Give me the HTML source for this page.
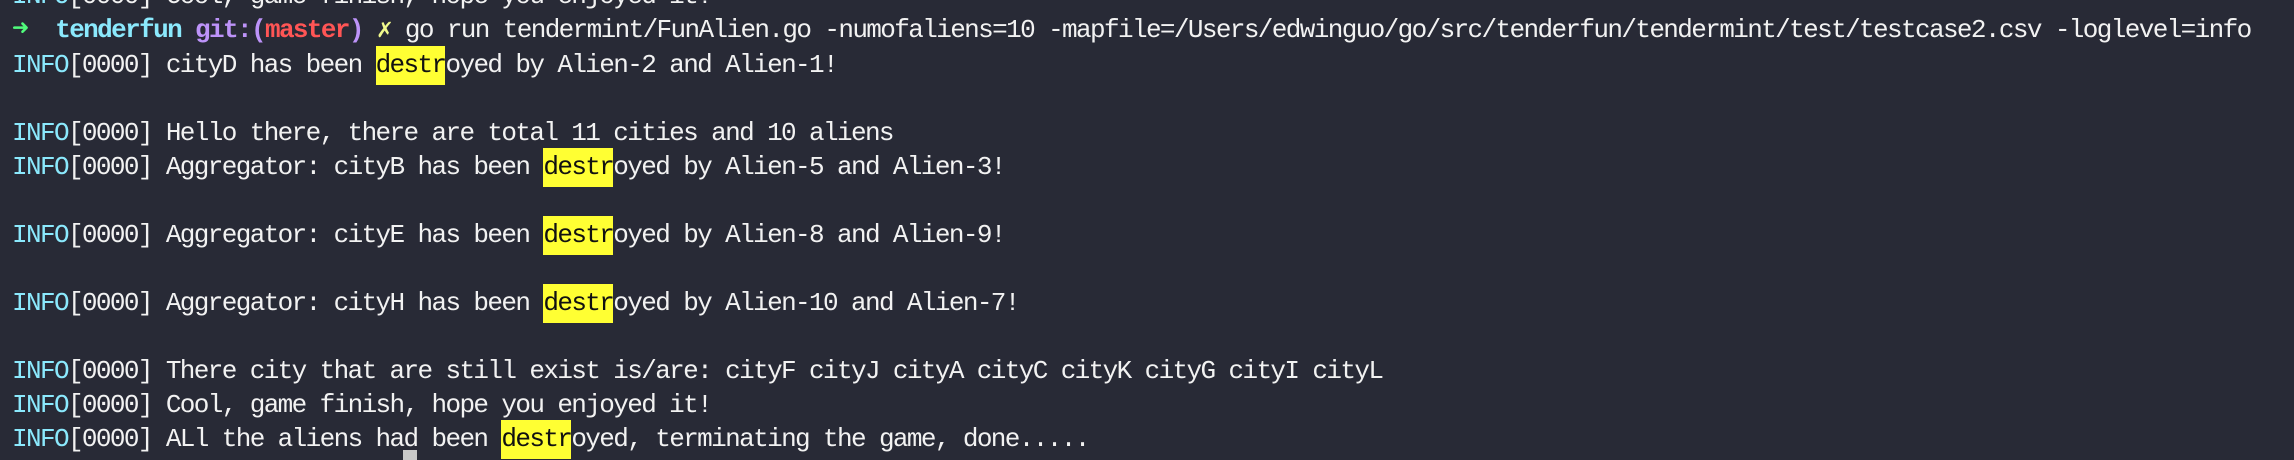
<!DOCTYPE html>
<html><head><meta charset="utf-8"><style>
html,body{margin:0;padding:0;}
body{width:2294px;height:460px;background:#282a36;overflow:hidden;position:relative;}
pre{position:absolute;left:12px;top:-21px;margin:0;font-family:"Liberation Mono","DejaVu Sans Mono",monospace;font-size:26px;line-height:34px;letter-spacing:-1.62px;color:#f2f2f2;white-space:pre;}
.i{color:#8be9fd}
.g{color:#50fa7b;font-weight:bold;font-size:28px}
.t{color:#8be9fd;font-weight:bold}
.p{color:#bd93f9;font-weight:bold}
.r{color:#ff5555;font-weight:bold}
.y{color:#f1fa8c;font-weight:bold}
.h{background:#ffff33;color:#111;padding:4px 0 5px 0}
#cur{position:absolute;left:403px;top:450px;width:14px;height:10px;background:#c8c8c8;}
</style></head><body>
<pre><span class="i">INFO</span>[0000] Cool, game finish, hope you enjoyed it!
<span class="g">➜</span>  <span class="t">tenderfun</span> <span class="p">git:(</span><span class="r">master</span><span class="p">)</span> <span class="y">✗</span> go run tendermint/FunAlien.go -numofaliens=10 -mapfile=/Users/edwinguo/go/src/tenderfun/tendermint/test/testcase2.csv -loglevel=info
<span class="i">INFO</span>[0000] cityD has been <span class="h">destr</span>oyed by Alien-2 and Alien-1!

<span class="i">INFO</span>[0000] Hello there, there are total 11 cities and 10 aliens
<span class="i">INFO</span>[0000] Aggregator: cityB has been <span class="h">destr</span>oyed by Alien-5 and Alien-3!

<span class="i">INFO</span>[0000] Aggregator: cityE has been <span class="h">destr</span>oyed by Alien-8 and Alien-9!

<span class="i">INFO</span>[0000] Aggregator: cityH has been <span class="h">destr</span>oyed by Alien-10 and Alien-7!

<span class="i">INFO</span>[0000] There city that are still exist is/are: cityF cityJ cityA cityC cityK cityG cityI cityL
<span class="i">INFO</span>[0000] Cool, game finish, hope you enjoyed it!
<span class="i">INFO</span>[0000] ALl the aliens had been <span class="h">destr</span>oyed, terminating the game, done.....</pre>
<div id="cur"></div>
</body></html>
